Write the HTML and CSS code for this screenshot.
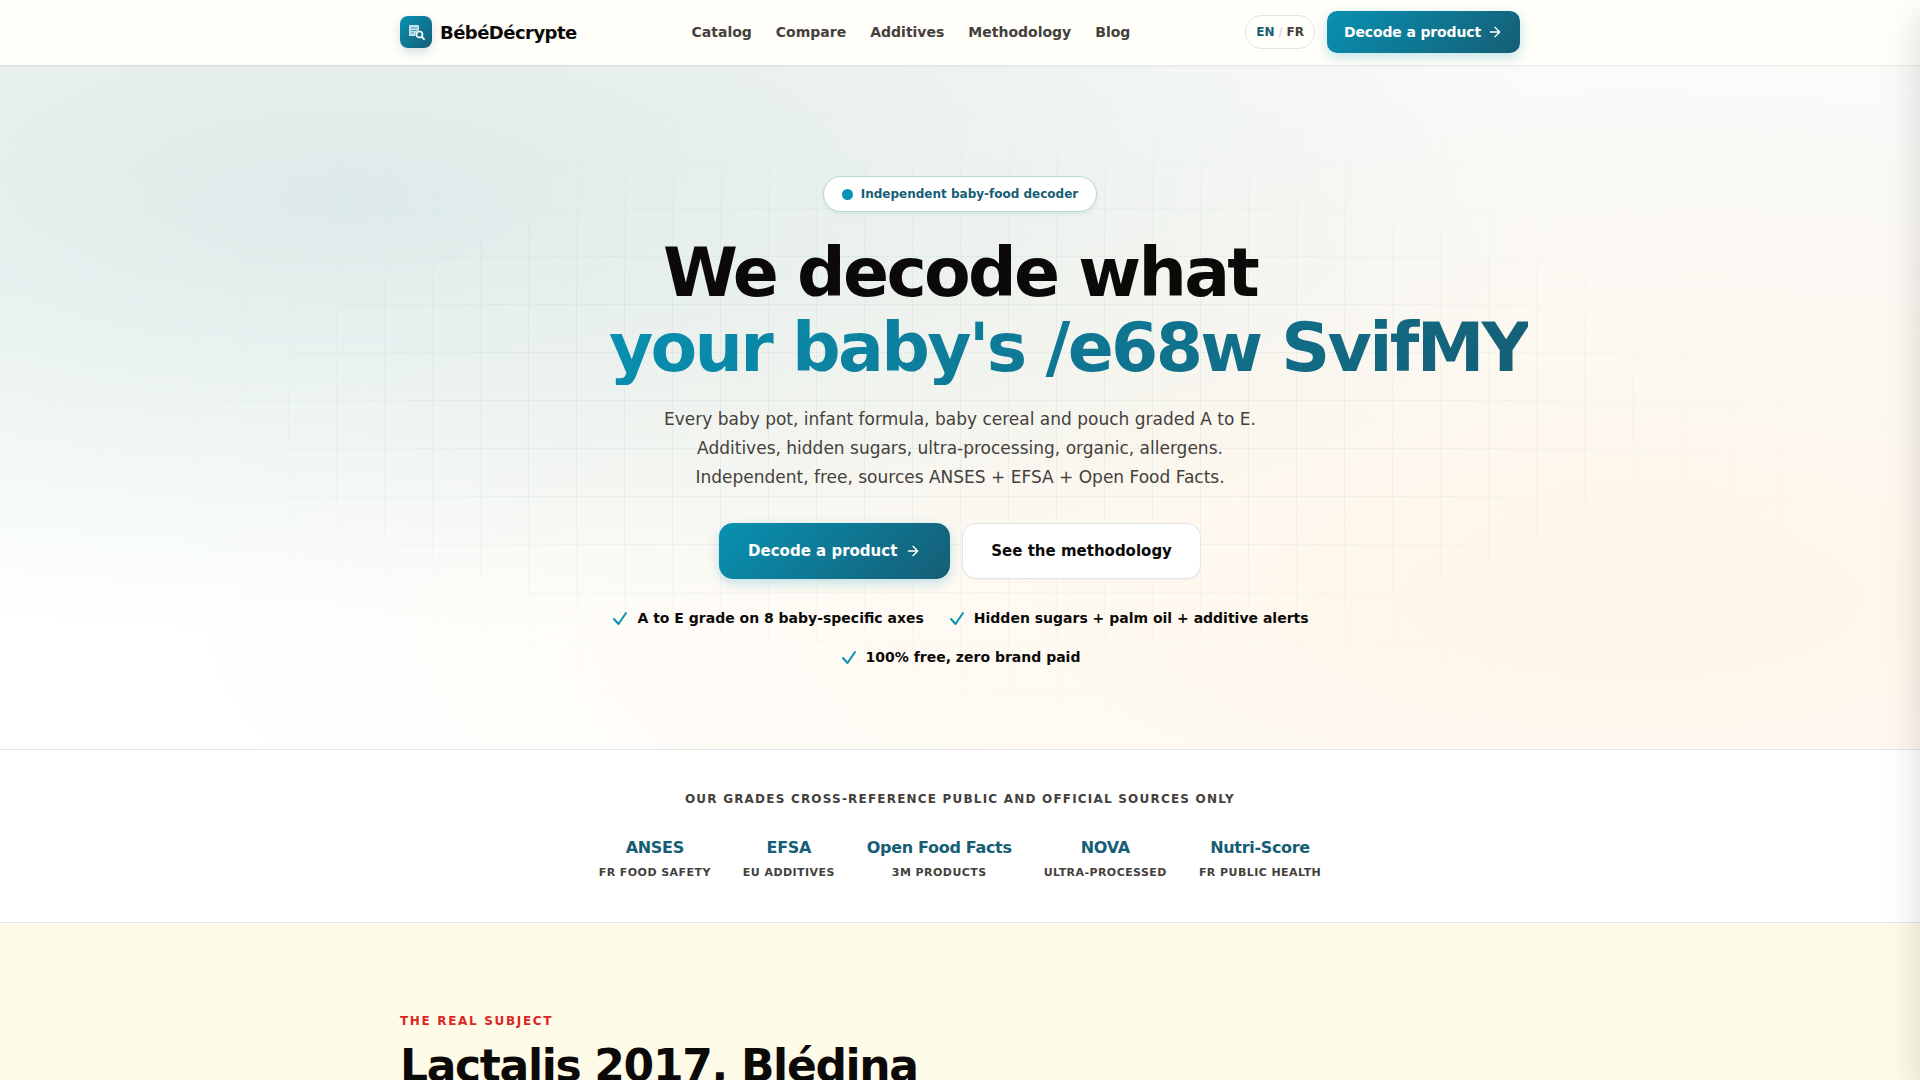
FILE: index.html
```html
<!DOCTYPE html>
<html lang="en">
<head>
    <meta charset="UTF-8">
    <meta name="viewport" content="width=device-width, initial-scale=1">
    <title>BébéDécrypte</title>
    <link rel="stylesheet" href="styles.css">
</head>
<body>
    <header class="header">
        <div class="container header-inner">
            <a class="brand" href="#">
                <span class="brand-logo">
                    <svg width="20" height="20" viewBox="0 0 20 20" fill="none">
                        <path d="M3 4a1 1 0 0 1 1-1h8a1 1 0 0 1 1 1v10H3z" fill="#fff" fill-opacity=".75"/>
                        <path d="M5 6h6M5 8.500h5M5 11h3" stroke="#2b93ad" stroke-width=".8"/>
                        <circle cx="13.500" cy="12.500" r="4" fill="#127390"/>
                        <circle cx="13.500" cy="12.500" r="3" stroke="#fff" stroke-width="1.600"/>
                        <path d="M15.800 14.800l2.200 2.400" stroke="#fff" stroke-width="1.800" stroke-linecap="round"/>
                    </svg>
                </span>
                BébéDécrypte
            </a>

            <nav class="nav">
                <a href="#">Catalog</a>
                <a href="#">Compare</a>
                <a href="#">Additives</a>
                <a href="#">Methodology</a>
                <a href="#">Blog</a>
            </nav>

            <div class="header-actions">
                <div class="lang">
                    <a class="active" href="#">EN</a>
                    <span>/</span>
                    <a href="#">FR</a>
                </div>
                <a class="btn btn-primary btn-small" href="#">
                    Decode a product
                    <svg class="arrow" viewBox="0 0 24 24"><path d="M5 12h14M12 5l7 7-7 7"/></svg>
                </a>
            </div>
        </div>
    </header>

    <main>
        <section class="hero">
            <div class="hero-inner">
                <span class="badge"><i class="dot"></i>Independent baby-food decoder</span>

                <h1>We decode what <span class="scramble">your baby's /e68w SvifMY</span></h1>

                <p class="lead">
                    Every baby pot, infant formula, baby cereal and pouch graded A to E.<br>
                    Additives, hidden sugars, ultra-processing, organic, allergens.<br>
                    Independent, free, sources ANSES + EFSA + Open Food Facts.
                </p>

                <div class="hero-actions">
                    <a class="btn btn-primary" href="#">
                        Decode a product
                        <svg class="arrow" viewBox="0 0 24 24"><path d="M5 12h14M12 5l7 7-7 7"/></svg>
                    </a>
                    <a class="btn btn-ghost" href="#">See the methodology</a>
                </div>

                <ul class="checks">
                    <li><svg viewBox="0 0 18 18"><path d="M3 9l4.500 5L15 3"/></svg>A to E grade on 8 baby-specific axes</li>
                    <li><svg viewBox="0 0 18 18"><path d="M3 9l4.500 5L15 3"/></svg>Hidden sugars + palm oil + additive alerts</li>
                    <li><svg viewBox="0 0 18 18"><path d="M3 9l4.500 5L15 3"/></svg>100% free, zero brand paid</li>
                </ul>
            </div>
        </section>

        <section class="sources">
            <p class="sources-title">Our grades cross-reference public and official sources only</p>
            <ul class="sources-list">
                <li><strong>ANSES</strong><span>FR food safety</span></li>
                <li><strong>EFSA</strong><span>EU additives</span></li>
                <li><strong>Open Food Facts</strong><span>3M products</span></li>
                <li><strong>NOVA</strong><span>Ultra-processed</span></li>
                <li><strong>Nutri-Score</strong><span>FR public health</span></li>
            </ul>
        </section>

        <section class="subject">
            <div class="container">
                <p class="eyebrow">The real subject</p>
                <h2>Lactalis 2017, Blédina</h2>
            </div>
        </section>
    </main>
</body>
</html>
```
FILE: styles.css
```css
:root {
    --teal: #0891b2;
    --teal-dark: #155e75;
    --ink: #0c0a09;
    --text: #44403c;
    --line: #e2e4e6;
    --gradient: linear-gradient(135deg, var(--teal), var(--teal-dark));
}

* {
    box-sizing: border-box;
}

body {
    margin: 0;
    background: #fefbe8;
    color: var(--ink);
    font-family: "DejaVu Sans", Verdana, sans-serif;
    font-size: 16px;
}

body::after {
    content: "";
    position: fixed;
    top: 0;
    bottom: 0;
    left: 100%;
    width: 320px;
    box-shadow: 0 16px 36px rgba(12, 10, 9, .15);
    z-index: 20;
    pointer-events: none;
}

a {
    color: inherit;
    text-decoration: none;
}

h1, h2, p, ul {
    margin: 0;
    padding: 0;
}

ul {
    list-style: none;
}

.container {
    max-width: 1168px;
    margin: 0 auto;
    padding: 0 24px;
}

/* header */
.header {
    position: sticky;
    top: 0;
    z-index: 10;
    padding-bottom: 1px;
    background: #fffef9;
    box-shadow: 0 1px 2px rgba(12, 10, 9, .08);
}

.header-inner {
    display: flex;
    align-items: center;
    justify-content: space-between;
    min-height: 64px;
}

.brand {
    display: flex;
    align-items: center;
    gap: 8px;
    font-size: 18px;
    font-weight: 700;
    letter-spacing: -0.03em;
}

.brand-logo {
    display: flex;
    align-items: center;
    justify-content: center;
    width: 32px;
    height: 32px;
    border-radius: 8px;
    background: var(--gradient);
    box-shadow: 0 4px 10px rgba(21, 94, 117, .18);
}

.nav {
    display: flex;
    gap: 24px;
    color: var(--text);
    font-size: 14px;
    font-weight: 600;
}

.header-actions {
    display: flex;
    align-items: center;
    gap: 12px;
}

.lang {
    display: flex;
    align-items: center;
    gap: 4px;
    height: 34px;
    padding: 0 10px;
    border: 1px solid var(--line);
    border-radius: 17px;
    color: var(--text);
    font-size: 12px;
    font-weight: 700;
}

.lang .active {
    color: var(--teal-dark);
}

.lang span {
    color: #cbd5e1;
    font-weight: 400;
}

.btn {
    display: inline-flex;
    align-items: center;
    gap: 8px;
    height: 56px;
    padding: 0 28px;
    border: 1px solid transparent;
    border-radius: 14px;
    font-size: 15px;
    font-weight: 700;
}

.btn-primary {
    background: var(--gradient) border-box;
    color: #fff;
    box-shadow: 0 4px 12px rgba(8, 145, 178, .25);
}

.btn-ghost {
    background: #fff;
    border-color: var(--line);
    box-shadow: 0 1px 2px rgba(12, 10, 9, .04);
}

.btn-small {
    gap: 6px;
    height: 42px;
    padding: 0 16px;
    border-radius: 10px;
    font-size: 14px;
    letter-spacing: -0.01em;
}

.arrow {
    width: 16px;
    height: 16px;
    fill: none;
    stroke: currentColor;
    stroke-width: 2;
    stroke-linecap: round;
    stroke-linejoin: round;
}

/* hero */
.hero {
    position: relative;
    padding: 111px 24px 80px;
    background:
        radial-gradient(ellipse 80% 80% at 18% 20%, rgba(15, 118, 110, .13), transparent 80%),
        radial-gradient(ellipse 80% 80% at 85% 78%, rgba(245, 165, 40, .11), transparent 95%),
        linear-gradient(180deg, #fafaf9, #fff 70%);
}

.hero::before {
    content: "";
    position: absolute;
    inset: 0;
    background:
        linear-gradient(to right, rgba(15, 118, 110, .05) 1px, transparent 1px) 0 -1px / 48px 48px,
        linear-gradient(to bottom, rgba(15, 118, 110, .05) 1px, transparent 1px) 0 -1px / 48px 48px;
    mask-image: radial-gradient(ellipse at center, #000 30%, transparent 70%);
}

.hero-inner {
    position: relative;
    display: flex;
    flex-direction: column;
    align-items: center;
    max-width: 702px;
    margin: 0 auto;
    text-align: center;
}

.badge {
    display: inline-flex;
    align-items: center;
    gap: 8px;
    height: 36px;
    padding: 0 18px;
    border: 1px solid #b9d9d7;
    border-radius: 18px;
    background: #fff;
    color: var(--teal-dark);
    font-size: 12px;
    font-weight: 600;
    box-shadow: 0 2px 4px rgba(15, 118, 110, .1);
}

.dot {
    width: 11px;
    height: 11px;
    border-radius: 50%;
    background: var(--teal);
}

h1 {
    width: 100%;
    margin: 23px 0 20px;
    font-size: 68px;
    line-height: 75px;
    letter-spacing: -0.04em;
}

.scramble {
    display: inline-block;
    white-space: nowrap;
    background: var(--gradient);
    background-clip: text;
    -webkit-background-clip: text;
    color: transparent;
}

.lead {
    color: var(--text);
    font-size: 17px;
    line-height: 29px;
}

.hero-actions {
    display: flex;
    gap: 12px;
    margin: 31px 0 28px;
}

.checks {
    display: flex;
    flex-wrap: wrap;
    justify-content: center;
    gap: 16px 24px;
    font-size: 14px;
    font-weight: 600;
    line-height: 23px;
}

.checks li {
    display: flex;
    align-items: center;
    gap: 8px;
}

.checks svg {
    width: 18px;
    height: 18px;
    fill: none;
    stroke: var(--teal);
    stroke-width: 2;
    stroke-linecap: round;
    stroke-linejoin: round;
}

/* sources */
.sources {
    padding: 40px 24px 39px;
    background: #fff;
    border-top: 1px solid var(--line);
    border-bottom: 1px solid var(--line);
    text-align: center;
}

.sources-title {
    color: var(--text);
    font-size: 12px;
    font-weight: 600;
    line-height: 18px;
    letter-spacing: 0.1em;
    text-transform: uppercase;
}

.sources-list {
    display: flex;
    flex-wrap: wrap;
    justify-content: center;
    gap: 32px;
    margin-top: 25px;
}

.sources-list li {
    display: flex;
    flex-direction: column;
    align-items: center;
}

.sources-list strong {
    color: var(--teal-dark);
    font-size: 16px;
    line-height: 30px;
    letter-spacing: -0.02em;
}

.sources-list span {
    color: var(--text);
    font-size: 11px;
    font-weight: 600;
    line-height: 20px;
    letter-spacing: 0.04em;
    text-transform: uppercase;
}

/* subject */
.subject {
    padding: 88px 0 0;
}

.eyebrow {
    color: #dc2626;
    font-size: 12px;
    font-weight: 700;
    line-height: 20px;
    letter-spacing: 0.14em;
    text-transform: uppercase;
}

h2 {
    margin-top: 10px;
    font-size: 44px;
    line-height: 50px;
    letter-spacing: -0.03em;
}
```
